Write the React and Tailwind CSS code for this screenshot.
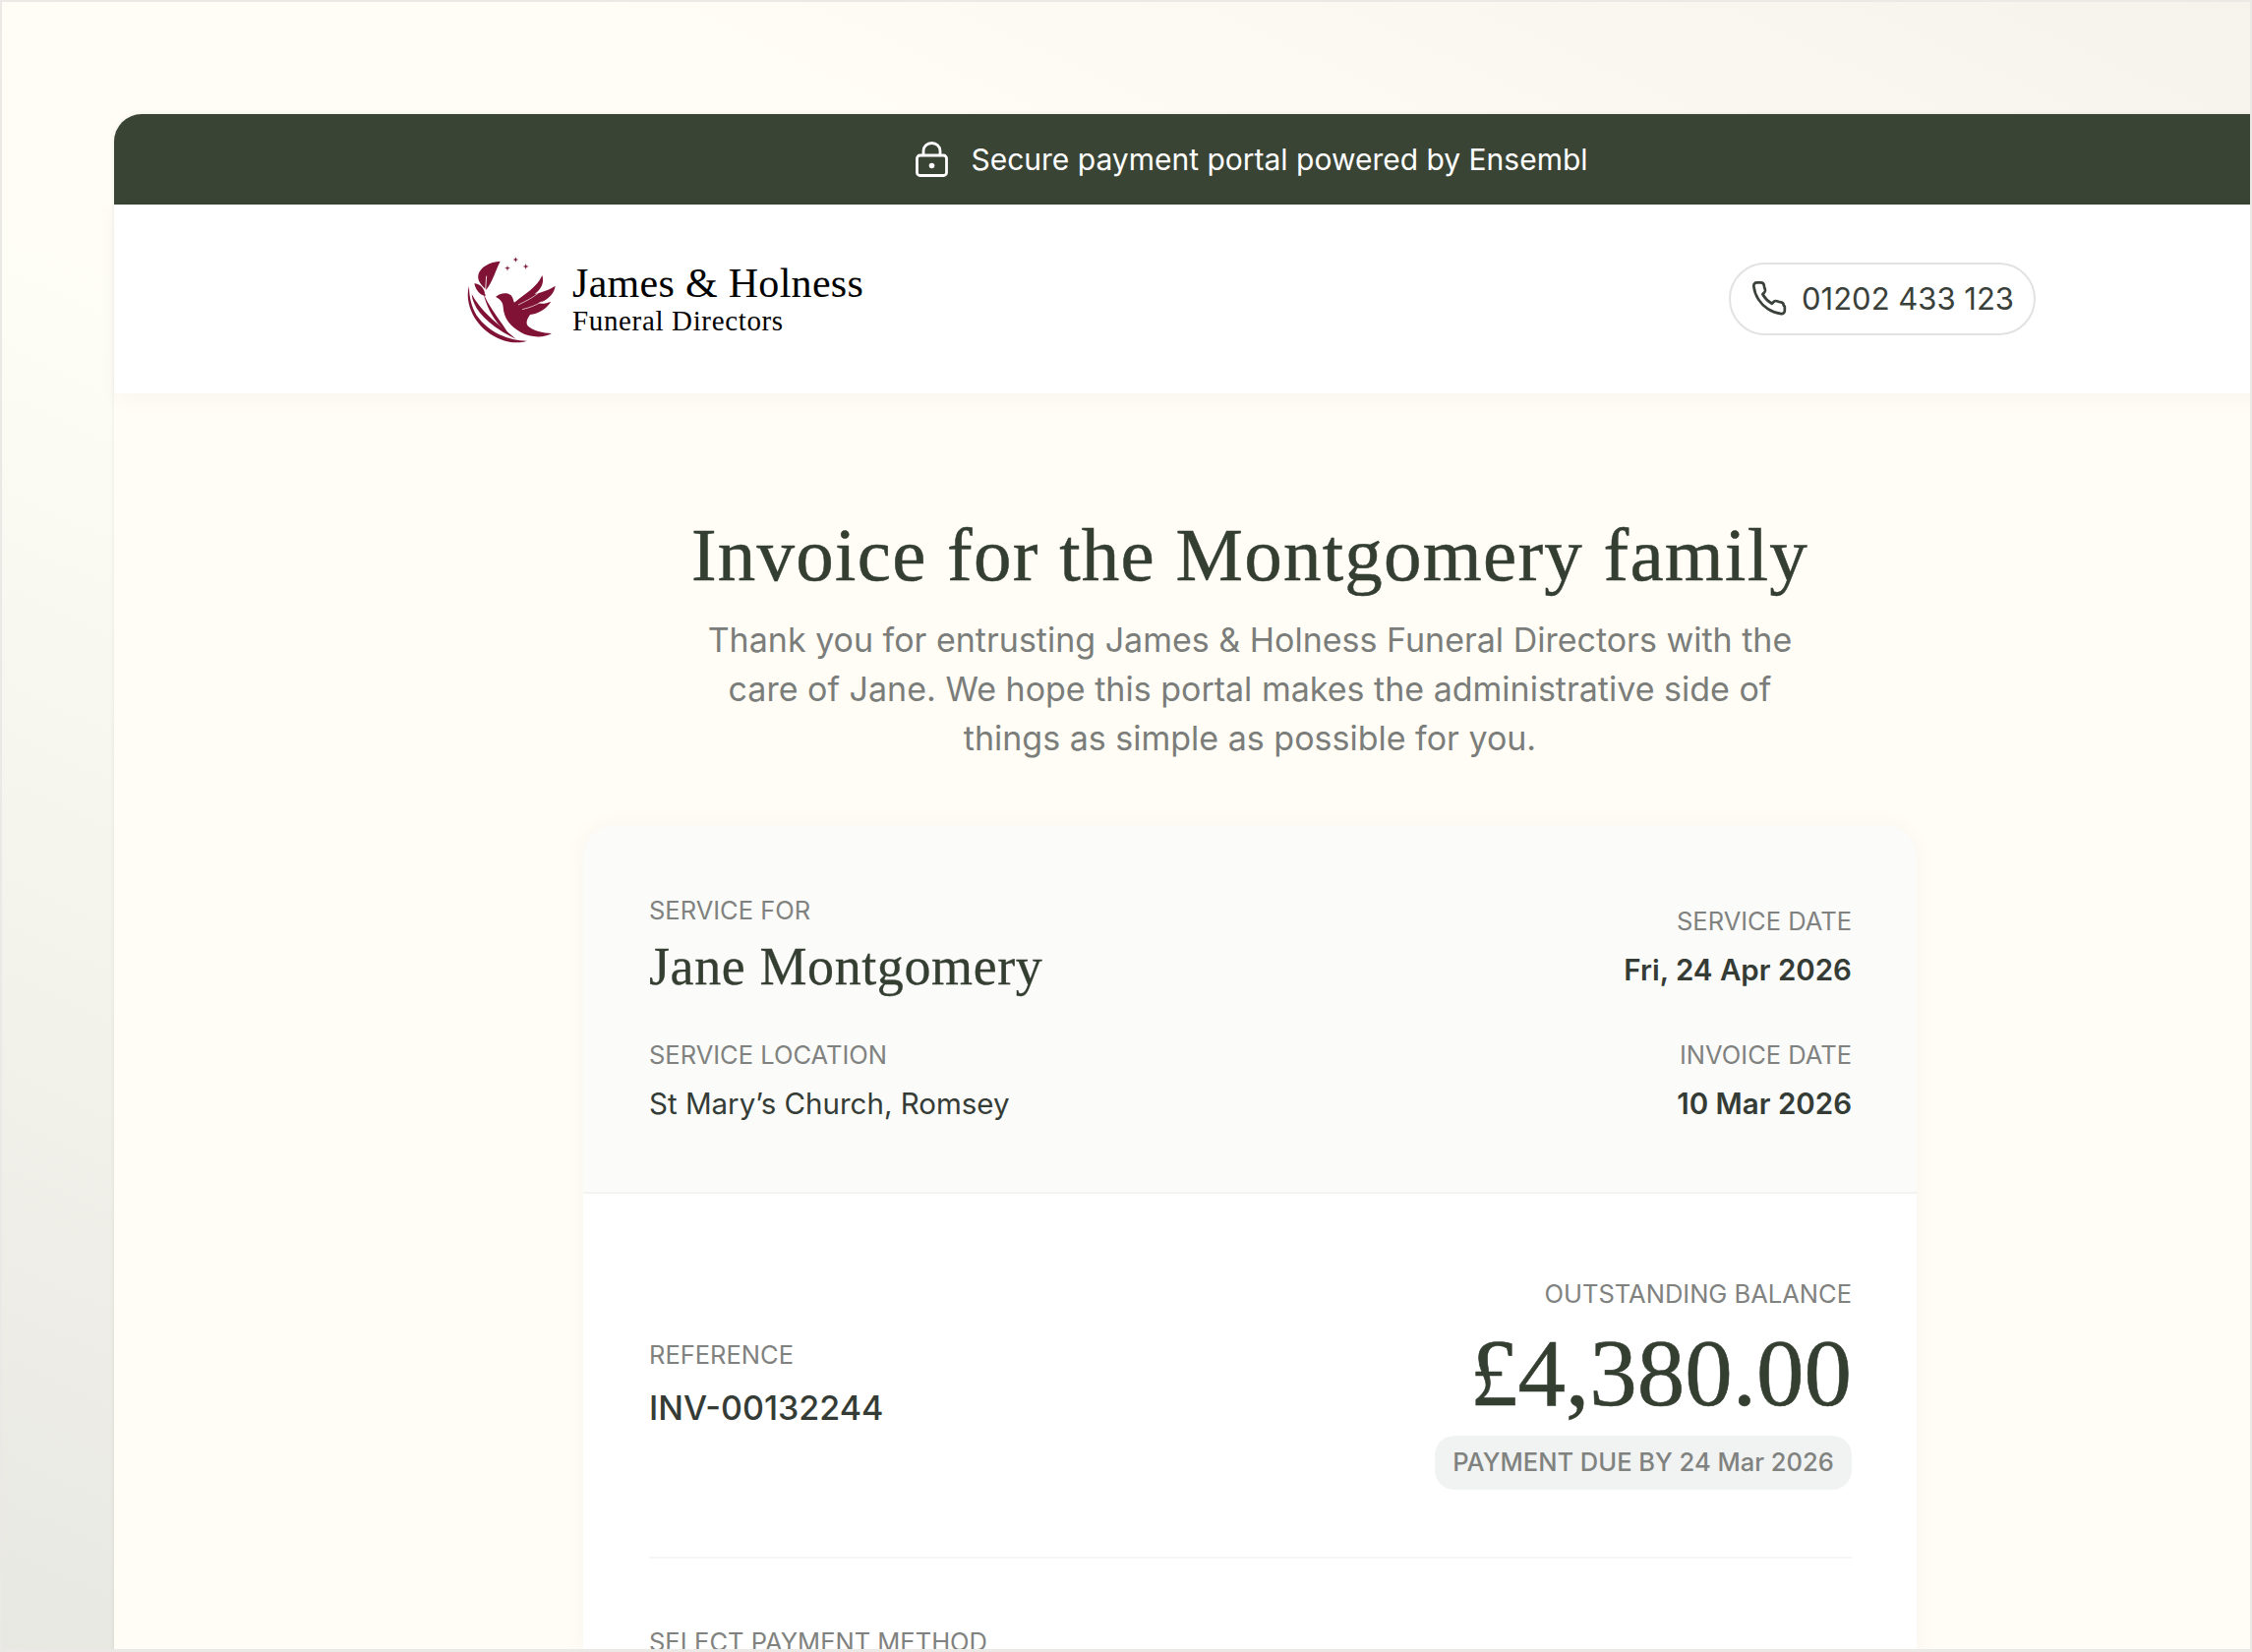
import React from "react";

const serif = "font-['Liberation_Serif',serif]";

const Logo = () => (
  <svg viewBox="100 85 285 270" className="w-[95px] h-[90px] shrink-0" fill="#7f1235">
    <path d="M254 92l2 6 6 2-6 2-2 6-2-6-6-2 6-2zM229 118l2 6 7 2-7 2-2 7-2-7-7-2 7-2zM285 112l2 7 7 2-7 2-2 7-2-7-7-2 7-2z" />
    <path d="M207 105C175 107 146 122 140 147C137 165 150 178 164 192C182 172 192 135 207 105Z" />
    <path d="M128 173C145 173 160 188 162 212C146 208 132 194 128 173Z" />
    <path d="M165 150L161 205" stroke="#fff" strokeWidth="2.5" fill="none" />
    <path d="M112 180C94 240 140 332 235 351C255 354 275 353 288 348C230 348 170 320 135 270C120 245 112 215 112 180Z" />
    <path d="M120 205C123 250 170 302 255 342C205 300 150 262 120 205Z" />
    <path d="M156 205C166 245 190 295 232 326C205 282 176 250 156 205Z" />
    <path d="M193 214C205 204 226 197 240 209C250 222 246 232 252 230C280 205 320 185 335 148C342 170 332 190 312 205C336 200 360 190 375 180C372 207 347 226 322 233C336 236 350 233 362 228C347 252 322 265 298 268C288 282 284 295 292 303C307 316 337 324 364 325C340 340 298 338 270 322C238 304 218 280 216 245C215 232 210 222 193 214Z" />
    <path d="M262 238C287 226 306 216 322 203M274 252C295 247 315 240 334 228" stroke="#fff" strokeWidth="2" fill="none" />
  </svg>
);

const LockIcon = () => (
  <svg viewBox="0 0 33 36" className="w-[33px] h-[36px] shrink-0" fill="none" stroke="#fff" strokeWidth="2.8">
    <rect x="1.5" y="14" width="30" height="20.5" rx="3" />
    <path d="M8 14V9.5C8 4.8 11.8 1.5 16.5 1.5S25 4.8 25 9.5V14" />
    <circle cx="16.5" cy="24.5" r="2.8" fill="#fff" stroke="none" />
  </svg>
);

const PhoneIcon = () => (
  <svg viewBox="0 0 24 24" className="w-[38px] h-[38px] shrink-0" fill="none" stroke="#3a403a" strokeWidth="1.7" strokeLinecap="round" strokeLinejoin="round">
    <path d="M22 16.9v2.6a2 2 0 0 1-2.2 2A19.8 19.8 0 0 1 11.2 18.4a19.5 19.5 0 0 1-6-6A19.8 19.8 0 0 1 2.1 3.7 2 2 0 0 1 4.1 1.5h2.6a2 2 0 0 1 2 1.7c.1.9.3 1.8.7 2.6a2 2 0 0 1-.5 2.1L7.8 9a16 16 0 0 0 6 6l1.1-1.1a2 2 0 0 1 2.1-.5c.8.3 1.7.6 2.6.7a2 2 0 0 1 1.7 2z" />
  </svg>
);

const Label = ({ children, className = "" }) => (
  <div className={`text-[25.5px] leading-[32px] text-[#808280] ${className}`}>{children}</div>
);

export default function App() {
  return (
    <div className="h-[1680px] w-[2290px] overflow-hidden border-x-2 border-t-2 border-b-[3px] border-[#ebe9e5] bg-[linear-gradient(205deg,#f5f3ec_0%,#fffdf6_30%,#fdfcf5_50%,#e8e8e2_100%)] pl-[114px] pt-[114px] font-['Inter',sans-serif]">
      <div className="h-[1700px] w-[2310px] rounded-t-[28px] bg-[#fffdf5] shadow-[0_0_4px_rgba(0,0,0,0.08)]">
        <div className="flex h-[92px] items-center justify-center gap-[23px] rounded-t-[28px] bg-[#3a4435] pl-[4px] text-[30px] text-white">
          <LockIcon />
          <span>Secure payment portal powered by Ensembl</span>
        </div>

        <div className="flex h-[192px] items-center justify-between bg-white pl-[357px] pr-[356px] shadow-[0_6px_20px_rgba(0,0,0,0.03)]">
          <div className="flex items-center gap-[14px]">
            <Logo />
            <div className={`${serif} text-black`}>
              <div className="text-[42px] leading-[44px] tracking-[0.3px]">James &amp; Holness</div>
              <div className="text-[29px] leading-[33px] tracking-[0.65px]">Funeral Directors</div>
            </div>
          </div>
          <div className="flex h-[74px] w-[312px] items-center gap-[14px] rounded-full border-2 border-[#e2e2e2] pl-[20px] text-[31px] text-[#3a403a]">
            <PhoneIcon />
            <span>01202 433 123</span>
          </div>
        </div>

        <div className="flex flex-col items-center pt-[116px]">
          <h1 className={`${serif} text-[77px] leading-[96px] tracking-[1.25px] text-[#343e31] [-webkit-text-stroke:0.5px]`}>Invoice for the Montgomery family</h1>
          <p className="mt-[14px] w-[1130px] text-center text-[34px] leading-[50px] text-[#7b7d7b]">
            Thank you for entrusting James &amp; Holness Funeral Directors with the care of Jane. We hope this portal makes the administrative side of things as simple as possible for you.
          </p>

          <div className="mt-[64px] w-[1356px] overflow-hidden rounded-t-[32px] bg-white shadow-[0_0_24px_rgba(0,0,0,0.04)]">
            <div className="flex h-[374px] justify-between border-b-2 border-[#f3f3f1] bg-[#fbfbfa] pl-[67px] pr-[66px] pt-[70px]">
              <div>
                <Label>SERVICE FOR</Label>
                <div className={`${serif} mt-[11px] text-[54px] leading-[60px] tracking-[0.6px] text-[#343e31] [-webkit-text-stroke:0.3px]`}>Jane Montgomery</div>
                <Label className="mt-[44px]">SERVICE LOCATION</Label>
                <div className="mt-[15px] text-[29.5px] leading-[36px] text-[#343c35]">St Mary’s Church, Romsey</div>
              </div>
              <div className="pt-[11px] text-right">
                <Label>SERVICE DATE</Label>
                <div className="mt-[15px] text-[29.5px] font-semibold leading-[36px] text-[#343c35]">Fri, 24 Apr 2026</div>
                <Label className="mt-[53px]">INVOICE DATE</Label>
                <div className="mt-[15px] text-[29.5px] font-semibold leading-[36px] text-[#343c35]">10 Mar 2026</div>
              </div>
            </div>

            <div className="pl-[67px] pr-[66px]">
              <div className="flex items-center justify-between border-b-2 border-[#f5f5f4] pb-[68px] pt-[86px]">
                <div>
                  <Label>REFERENCE</Label>
                  <div className="mt-[17px] text-[34px] font-medium leading-[42px] text-[#343c35]">INV-00132244</div>
                </div>
                <div className="flex flex-col items-end">
                  <Label>OUTSTANDING BALANCE</Label>
                  <div className={`${serif} mt-[15px] text-[97px] leading-[100px] text-[#343e31] [-webkit-text-stroke:0.6px]`}>£4,380.00</div>
                  <div className="mt-[13px] flex h-[55px] w-[424px] items-center justify-center rounded-[20px] bg-[#f1f2f2] text-[25.5px] font-medium text-[#808280]">PAYMENT DUE BY 24 Mar 2026</div>
                </div>
              </div>
              <Label className="mt-[69px]">SELECT PAYMENT METHOD</Label>
            </div>
          </div>
        </div>
      </div>
    </div>
  );
}
